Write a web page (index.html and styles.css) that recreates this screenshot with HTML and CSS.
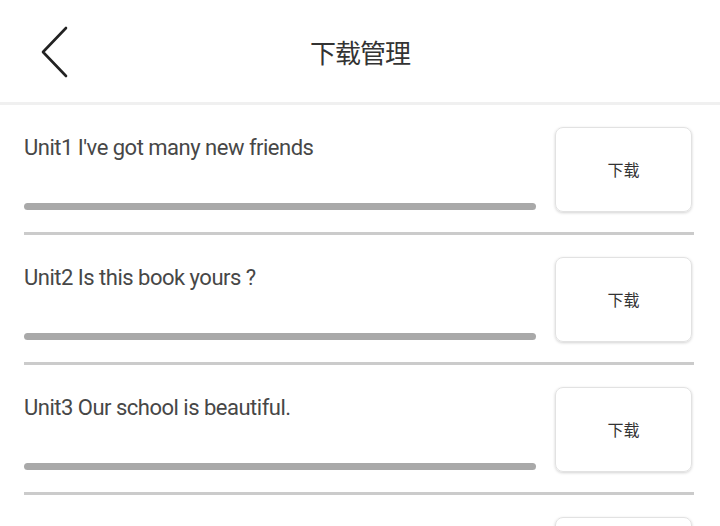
FILE: index.html
```html
<!DOCTYPE html>
<html lang="zh">
<head>
<meta charset="utf-8">
<title>下载管理</title>
<link rel="stylesheet" href="styles.css">
</head>
<body>
<header class="header">
  <div class="back">
    <svg width="30" height="52" viewBox="0 0 30 52"><path d="M26 2 L3 26 L26 50" fill="none" stroke="#222" stroke-width="2.6" stroke-linecap="round" stroke-linejoin="round"/></svg>
  </div>
  <h1 class="title">下载管理</h1>
  <div></div>
</header>
<main class="list">
  <div class="item">
    <div class="info">
      <div class="name">Unit1 I've got many new friends</div>
      <div class="bar"></div>
    </div>
    <div class="btn">下载</div>
  </div>
  <div class="divider"></div>
  <div class="item">
    <div class="info">
      <div class="name">Unit2 Is this book yours ?</div>
      <div class="bar"></div>
    </div>
    <div class="btn">下载</div>
  </div>
  <div class="divider"></div>
  <div class="item">
    <div class="info">
      <div class="name">Unit3 Our school is beautiful.</div>
      <div class="bar"></div>
    </div>
    <div class="btn">下载</div>
  </div>
  <div class="divider"></div>
  <div class="item">
    <div class="info">
      <div class="name">Unit4 What time is it now?</div>
      <div class="bar"></div>
    </div>
    <div class="btn">下载</div>
  </div>
</main>
</body>
</html>
```
FILE: styles.css
```css
html, body {
  margin: 0;
  padding: 0;
  background: #fff;
  overflow: hidden;
  height: 526px;
}
body {
  font-family: Roboto, "Noto Sans CJK SC", sans-serif;
  color: #3a3a3a;
}
.header {
  height: 102px;
  display: grid;
  grid-template-columns: 1fr auto 1fr;
  align-items: center;
  border-bottom: 3px solid #f0f0f0;
}
.back {
  padding-left: 40px;
  display: flex;
  align-items: center;
  padding-top: 2px;
}
.title {
  margin: 0;
  font-weight: 400;
  font-size: 26px;
  color: #333;
  letter-spacing: -1px;
  font-family: "Noto Sans CJK SC", sans-serif;
}
.item {
  display: flex;
  gap: 19px;
  padding: 22px 28px 20px 24px;
}
.info {
  flex: 1;
  display: flex;
  flex-direction: column;
  justify-content: space-between;
  padding: 8px 0 2px;
}
.name {
  font-size: 22px;
  line-height: 26px;
  letter-spacing: -0.5px;
  color: #474747;
}
.bar {
  height: 7px;
  border-radius: 4px;
  background: #a9a9a9;
}
.btn {
  box-sizing: border-box;
  width: 137px;
  height: 85px;
  border: 1px solid #e2e2e2;
  border-radius: 8px;
  box-shadow: 0 1px 3px rgba(0,0,0,0.18);
  display: flex;
  align-items: center;
  justify-content: center;
  font-family: "Noto Sans CJK SC", sans-serif;
  font-size: 16px;
  color: #333;
  padding-bottom: 2px;
}
.divider {
  height: 3px;
  background: #cbcbcb;
  margin: 0 26px 0 24px;
}
```
